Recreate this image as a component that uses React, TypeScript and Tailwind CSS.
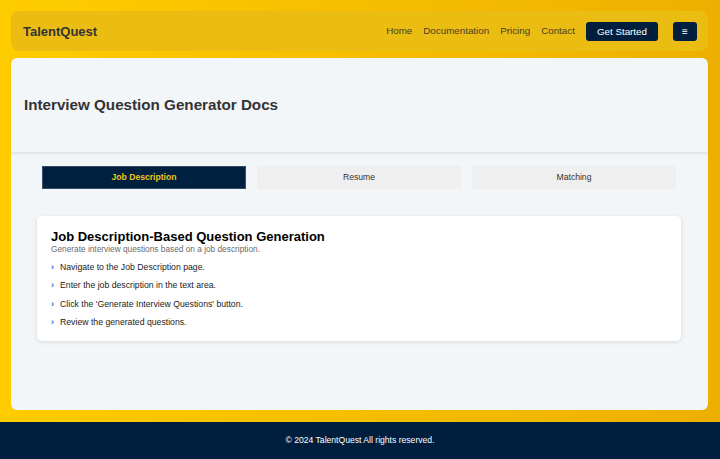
import React from "react";

export default function App() {
  const steps = [
    "Navigate to the Job Description page.",
    "Enter the job description in the text area.",
    "Click the 'Generate Interview Questions' button.",
    "Review the generated questions.",
  ];
  return (
    <div
      className="min-h-screen flex flex-col bg-gradient-to-r from-[#ffcc00] to-[#eeb000]"
      style={{ fontFamily: '"Liberation Sans", Arial, sans-serif' }}
    >
      <div className="flex-1 flex flex-col pl-[11px] pr-[12px] pt-[11px] pb-[12px] gap-[7px]">
        <header className="h-[40px] rounded-[8px] bg-[#ebbd13] flex items-center justify-between pl-[12px] pr-[11px]">
          <div className="text-[13px] font-bold text-[#333333] pt-[1px]">TalentQuest</div>
          <nav className="flex items-center pt-[1px]">
            <div className="flex items-center gap-[11px] text-[9.8px] text-[#4a4020]">
              <span>Home</span>
              <span>Documentation</span>
              <span>Pricing</span>
              <span>Contact</span>
            </div>
            <button className="ml-[11px] h-[19px] px-[11px] rounded-[3px] bg-[#001f3f] text-white text-[9.8px] leading-none">
              Get Started
            </button>
            <button className="ml-[15px] h-[19px] w-[24px] rounded-[3px] bg-[#001f3f] text-white text-[10px] leading-none flex items-center justify-center">
              ≡
            </button>
          </nav>
        </header>
        <main className="flex-1 rounded-[6px] bg-[#f3f6f9]">
          <div className="h-[95px] flex items-center pl-[13px] border-b border-[#e2e6ea] shadow-[0_1px_2px_rgba(0,0,0,0.08)]">
            <h1 className="text-[15.2px] font-bold text-[#333333]">Interview Question Generator Docs</h1>
          </div>
          <div className="mt-[13px] pl-[31px] pr-[32px] grid grid-cols-3 gap-[11px]">
            <div className="h-[23px] bg-[#002040] border border-[#3a4c66] text-[#f2c319] font-bold text-[8.6px] flex items-center justify-center">
              Job Description
            </div>
            <div className="h-[23px] bg-[#efefef] text-[#333333] text-[8.6px] flex items-center justify-center">
              Resume
            </div>
            <div className="h-[23px] bg-[#efefef] text-[#333333] text-[8.6px] flex items-center justify-center">
              Matching
            </div>
          </div>
          <div className="mt-[27px] ml-[26px] mr-[27px] bg-white rounded-[5px] shadow-[0_1px_4px_rgba(0,0,0,0.12)] pt-[14px] pb-[13px] px-[14px]">
            <h2 className="text-[13px] leading-[13px] font-bold text-black">
              Job Description-Based Question Generation
            </h2>
            <p className="text-[8.3px] leading-[10px] text-[#6b6b6b] mt-[1px]">
              Generate interview questions based on a job description.
            </p>
            <ul className="mt-[7px] flex flex-col gap-[6.3px]">
              {steps.map((s) => (
                <li key={s} className="flex items-center text-[8.7px] leading-[12px] text-[#222222]">
                  <span className="w-[9px] text-[#2f6fd6] font-bold text-[9px]">›</span>
                  <span>{s}</span>
                </li>
              ))}
            </ul>
          </div>
        </main>
      </div>
      <footer className="h-[37px] bg-[#001f3f] flex items-center justify-center text-white text-[8.6px]">
        © 2024 TalentQuest All rights reserved.
      </footer>
    </div>
  );
}
